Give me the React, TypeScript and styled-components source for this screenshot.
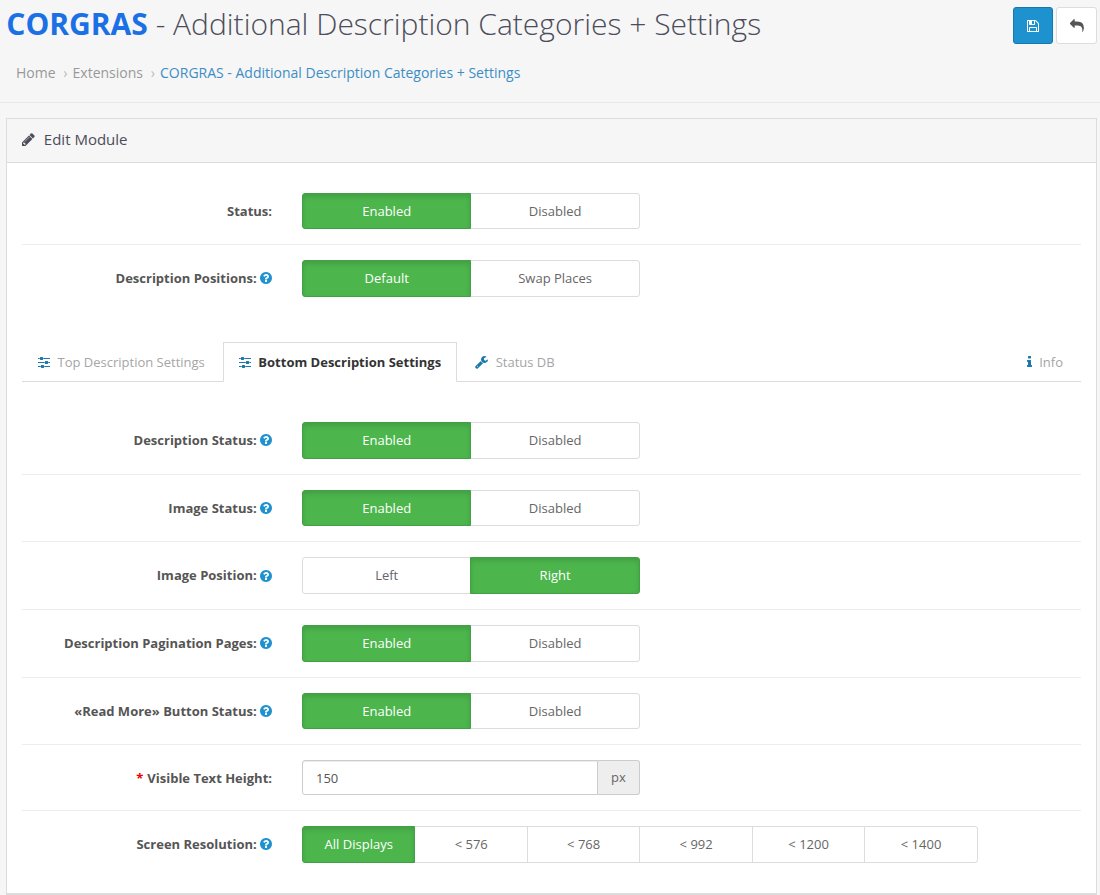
import React from "react";
import styled, { createGlobalStyle, css } from "styled-components";

const Global = createGlobalStyle`
  *, *::before, *::after { box-sizing: border-box; }
  html, body { margin: 0; padding: 0; }
  body {
    background: #f6f6f6;
    color: #666;
    font-family: "Open Sans", sans-serif;
    font-size: 13px;
    line-height: 1.42857;
    overflow: hidden;
  }
  button, input { font-family: inherit; font-size: inherit; line-height: inherit; }
`;

type Glyph = { x: number; w: number; d: string };

const glyphs: Record<string, Glyph> = {
  pencil: { x: 128, w: 1536, d: "M491 1536l91-91-235-235-91 91v107h128v128h107zm523-928q0-22-22-22-10 0-17 7l-542 542q-7 7-7 17 0 22 22 22 10 0 17-7l542-542q7-7 7-17zm-54-192l416 416-832 832h-416v-416zm683 96q0 53-37 90l-166 166-416-416 166-165q36-38 90-38 53 0 91 38l235 234q37 39 37 91z" },
  reply: { x: 0, w: 1792, d: "M1792 1120q0 166-127 451-3 7-10.5 24t-13.5 30-13 22q-12 17-28 17-15 0-23.5-10t-8.5-25q0-9 2.5-26.5t2.5-23.5q5-68 5-123 0-112-19.5-200.5t-54-153.5-89-112-117-78.5-141.5-49-159-25.5-173-7h-224v256q0 26-19 45t-45 19-45-19l-512-512q-19-19-19-45t19-45l512-512q19-19 45-19t45 19 19 45v256h224q713 0 875 403 53 134 53 333z" },
  save: { x: 128, w: 1536, d: "M512 1536h768v-384h-768v384zm896 0h128v-896q0-14-10-38.5t-20-34.5l-281-281q-10-10-34-20t-39-10v416q0 40-28 68t-68 28h-576q-40 0-68-28t-28-68v-416h-128v1280h128v-416q0-40 28-68t68-28h832q40 0 68 28t28 68v416zm-384-928v-320q0-13-9.5-22.5t-22.5-9.5h-192q-13 0-22.5 9.5t-9.5 22.5v320q0 13 9.5 22.5t22.5 9.5h192q13 0 22.5-9.5t9.5-22.5zm640 32v928q0 40-28 68t-68 28h-1344q-40 0-68-28t-28-68v-1344q0-40 28-68t68-28h928q40 0 88 20t76 48l280 280q28 28 48 76t20 88z" },
  help: { x: 128, w: 1536, d: "M1024 1376v-192q0-14-9-23t-23-9h-192q-14 0-23 9t-9 23v192q0 14 9 23t23 9h192q14 0 23-9t9-23zm256-672q0-88-55.5-163t-138.5-116-170-41q-243 0-371 213-15 24 8 42l132 100q7 6 19 6 16 0 25-12 53-68 86-92 34-24 86-24 48 0 85.5 26t37.5 59q0 38-20 61t-68 45q-63 28-115.5 86.5t-52.5 125.5v36q0 14 9 23t23 9h192q14 0 23-9t9-23q0-19 21.5-49.5t54.5-49.5q32-18 49-28.5t46-35 44.5-48 28-60.5 12.5-81zm384 192q0 209-103 385.5t-279.5 279.5-385.5 103-385.5-103-279.5-279.5-103-385.5 103-385.5 279.5-279.5 385.5-103 385.5 103 279.5 279.5 103 385.5z" },
  sliders: { x: 128, w: 1536, d: "M480 1408v128h-352v-128h352zm352-128q26 0 45 19t19 45v256q0 26-19 45t-45 19h-256q-26 0-45-19t-19-45v-256q0-26 19-45t45-19h256zm160-384v128h-864v-128h864zm-640-512v128h-224v-128h224zm1312 1024v128h-736v-128h736zm-960-1152q26 0 45 19t19 45v256q0 26-19 45t-45 19h-256q-26 0-45-19t-19-45v-256q0-26 19-45t45-19h256zm640 512q26 0 45 19t19 45v256q0 26-19 45t-45 19h-256q-26 0-45-19t-19-45v-256q0-26 19-45t45-19h256zm320 128v128h-224v-128h224zm0-512v128h-864v-128h864z" },
  wrench: { x: 64, w: 1664, d: "M448 1472q0-26-19-45t-45-19-45 19-19 45 19 45 45 19 45-19 19-45zm644-420l-682 682q-37 37-90 37-52 0-91-37l-106-108q-38-36-38-90 0-53 38-91l681-681q39 98 114.5 173.5t173.5 114.5zm634-435q0 39-23 106-47 134-164.5 217.5t-258.5 83.5q-185 0-316.5-131.5t-131.5-316.5 131.5-316.5 316.5-131.5q58 0 121.5 16.5t107.5 46.5q16 11 16 28t-16 28l-293 169v224l193 107q5-3 79-48.5t135.5-81 70.5-35.5q15 0 23.5 10t8.5 25z" },
  info: { x: 576, w: 640, d: "M1216 1344v128q0 26-19 45t-45 19h-512q-26 0-45-19t-19-45v-128q0-26 19-45t45-19h64v-384h-64q-26 0-45-19t-19-45v-128q0-26 19-45t45-19h384q26 0 45 19t19 45v576h64q26 0 45 19t19 45zm-128-1152v192q0 26-19 45t-45 19h-256q-26 0-45-19t-19-45v-192q0-26 19-45t45-19h256q26 0 45 19t19 45z" },
};

const Svg = styled.svg`
  display: block;
  flex: none;
  fill: currentColor;
`;

const Icon = ({ name, size = 14 }: { name: string; size?: number }) => {
  const g = glyphs[name];
  return (
    <Svg viewBox={`${g.x} 0 ${g.w} 1792`} width={(g.w * size) / 1792} height={size} aria-hidden="true">
      <path d={g.d} />
    </Svg>
  );
};

const Header = styled.header`
  display: flex;
  justify-content: space-between;
  height: 103px;
  padding: 7px 3px 0 6.3px;
  border-bottom: 1px solid #e9e9e9;
`;

const Title = styled.h1`
  margin: 0;
  font-size: 30px;
  font-weight: 300;
  line-height: 33px;
  color: #4c4d5a;
  white-space: nowrap;
`;

const Brand = styled.b`
  font-weight: 700;
  color: #1c70e6;
`;

const Crumbs = styled.ol`
  display: flex;
  margin: 23px 0 0;
  padding: 0 0 0 9.7px;
  list-style: none;
  font-size: 14px;
  line-height: 20px;
`;

const Crumb = styled.li<{ $current?: boolean }>`
  color: ${(p) => (p.$current ? "#3c8dc5" : "#999")};
  white-space: nowrap;
  &:not(:first-child)::before {
    content: "›";
    padding: 0 5px 0 7.8px;
    color: #bbb;
  }
`;

const Actions = styled.div`
  display: flex;
  gap: 3px;
`;

const ActionButton = styled.button<{ $primary?: boolean }>`
  display: flex;
  align-items: center;
  justify-content: center;
  width: ${(p) => (p.$primary ? "40px" : "41px")};
  height: 37px;
  padding: 0;
  border: 1px solid ${(p) => (p.$primary ? "#1978ab" : "#ddd")};
  border-radius: 3px;
  background: ${(p) => (p.$primary ? "#1e91cf" : "#fff")};
  color: ${(p) => (p.$primary ? "#fff" : "#555")};
`;

const Panel = styled.main`
  margin: 15px 3px 0 6px;
  border: 1px solid #dcdcdc;
  border-bottom-width: 2px;
  background: #fff;
`;

const PanelHeading = styled.div`
  display: flex;
  align-items: center;
  gap: 9px;
  height: 43.6px;
  padding: 0 15px 2px;
  border-bottom: 1px solid #dcdcdc;
  background: #f6f6f6;
  color: #4c4d5a;
  font-size: 15px;
`;

const PanelBody = styled.div`
  padding: 15px;
`;

const Row = styled.div`
  display: flex;
  align-items: center;
  padding: 15px 0;
  & + & {
    border-top: 1px solid #ededed;
  }
`;

const Label = styled.label<{ $lowered?: boolean }>`
  display: flex;
  align-items: center;
  justify-content: flex-end;
  gap: 4px;
  width: 250px;
  margin-right: 30px;
  padding-top: ${(p) => (p.$lowered ? "2px" : "0")};
  font-weight: 700;
  color: #555;
  white-space: nowrap;
`;

const HelpMark = styled.span`
  margin-left: -0.7px;
  padding-bottom: 0.3px;
  color: #1e91cf;
`;

const Required = styled.span`
  color: #e00;
`;

const Group = styled.div<{ $wide?: boolean }>`
  display: flex;
  width: ${(p) => (p.$wide ? "675.8px" : "337.8px")};
`;

const Option = styled.button<{ $active?: boolean }>`
  position: relative;
  flex: 1 1 0;
  height: 36.57px;
  padding: 0;
  border: 1px solid #dcdcdc;
  background: #fff;
  color: #666;
  &:not(:first-child) {
    margin-left: -1px;
  }
  &:first-child {
    border-radius: 3px 0 0 3px;
  }
  &:last-child {
    border-radius: 0 3px 3px 0;
  }
  ${(p) =>
    p.$active &&
    css`
      z-index: 1;
      border-color: #419f45;
      background: #4cb64c;
      color: #fff;
      box-shadow: inset 0 3px 5px rgba(0, 0, 0, 0.125);
    `}
`;

const InputGroup = styled.div`
  display: flex;
  width: 338px;
  height: 35px;
`;

const Input = styled.input`
  flex: 1;
  min-width: 0;
  padding: 2px 13px 0;
  border: 1px solid #ccc;
  border-radius: 3px 0 0 3px;
  background: #fff;
  color: #555;
  box-shadow: inset 0 1px 1px rgba(0, 0, 0, 0.075);
  outline: none;
`;

const Addon = styled.span`
  display: flex;
  align-items: center;
  justify-content: center;
  width: 42px;
  border: 1px solid #ccc;
  border-left: 0;
  border-radius: 0 3px 3px 0;
  background: #eee;
  color: #666;
`;

const Tabs = styled.nav`
  display: flex;
  margin: 30px 0 25px;
  border-bottom: 1px solid #dcdcdc;
`;

const Tab = styled.a<{ $active?: boolean; $end?: boolean }>`
  display: flex;
  align-items: center;
  gap: 7.5px;
  margin: 0 2px -1px ${(p) => (p.$end ? "auto" : "0")};
  padding: 10px 15px;
  border: 1px solid transparent;
  color: #a5a5a5;
  white-space: nowrap;
  ${(p) =>
    p.$active &&
    css`
      border-color: #dcdcdc #dcdcdc #fff;
      background: #fff;
      color: #333;
      font-weight: 700;
    `}
  svg {
    color: #1b78ac;
  }
`;

type FieldProps = {
  label: string;
  help?: boolean;
  required?: boolean;
  children: React.ReactNode;
};

const Field = ({ label, help, required, children }: FieldProps) => (
  <Row>
    <Label $lowered={required}>
      {required && <Required>*</Required>}
      {label}
      {help && (
        <HelpMark>
          <Icon name="help" />
        </HelpMark>
      )}
    </Label>
    {children}
  </Row>
);

const Choice = ({ options, active = 0, wide }: { options: string[]; active?: number; wide?: boolean }) => (
  <Group $wide={wide}>
    {options.map((o, i) => (
      <Option key={o} type="button" $active={i === active}>
        {o}
      </Option>
    ))}
  </Group>
);

const onOff = ["Enabled", "Disabled"];

export default function App() {
  return (
    <>
      <Global />
      <Header>
        <div>
          <Title>
            <Brand>CORGRAS</Brand> - Additional Description Categories + Settings
          </Title>
          <Crumbs>
            <Crumb>Home</Crumb>
            <Crumb>Extensions</Crumb>
            <Crumb $current>CORGRAS - Additional Description Categories + Settings</Crumb>
          </Crumbs>
        </div>
        <Actions>
          <ActionButton $primary type="button" aria-label="Save">
            <Icon name="save" />
          </ActionButton>
          <ActionButton type="button" aria-label="Back">
            <Icon name="reply" />
          </ActionButton>
        </Actions>
      </Header>
      <Panel>
        <PanelHeading>
          <Icon name="pencil" size={15} />
          Edit Module
        </PanelHeading>
        <PanelBody>
          <section>
            <Field label="Status:">
              <Choice options={onOff} />
            </Field>
            <Field label="Description Positions:" help>
              <Choice options={["Default", "Swap Places"]} />
            </Field>
          </section>
          <Tabs>
            <Tab>
              <Icon name="sliders" />
              Top Description Settings
            </Tab>
            <Tab $active>
              <Icon name="sliders" />
              Bottom Description Settings
            </Tab>
            <Tab>
              <Icon name="wrench" />
              Status DB
            </Tab>
            <Tab $end>
              <Icon name="info" />
              Info
            </Tab>
          </Tabs>
          <section>
            <Field label="Description Status:" help>
              <Choice options={onOff} />
            </Field>
            <Field label="Image Status:" help>
              <Choice options={onOff} />
            </Field>
            <Field label="Image Position:" help>
              <Choice options={["Left", "Right"]} active={1} />
            </Field>
            <Field label="Description Pagination Pages:" help>
              <Choice options={onOff} />
            </Field>
            <Field label="«Read More» Button Status:" help>
              <Choice options={onOff} />
            </Field>
            <Field label="Visible Text Height:" required>
              <InputGroup>
                <Input defaultValue="150" />
                <Addon>px</Addon>
              </InputGroup>
            </Field>
            <Field label="Screen Resolution:" help>
              <Choice wide options={["All Displays", "< 576", "< 768", "< 992", "< 1200", "< 1400"]} />
            </Field>
          </section>
        </PanelBody>
      </Panel>
    </>
  );
}
